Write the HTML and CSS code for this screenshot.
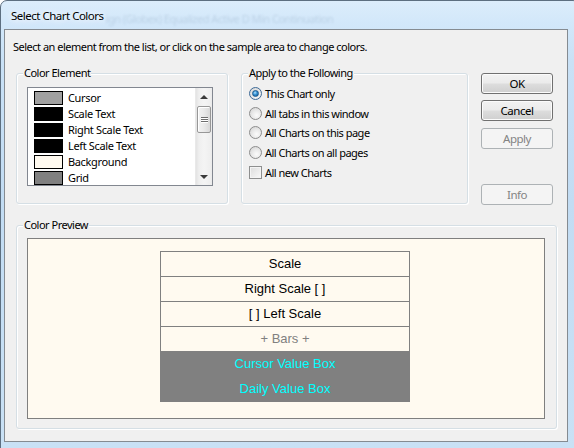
FILE: index.html
```html
<!DOCTYPE html>
<html>
<head>
<meta charset="utf-8">
<link rel="stylesheet" href="styles.css">
</head>
<body>
<div class="window">
  <div class="titlebar">
    <span class="title">Select Chart Colors</span>
    <span class="ghost">ign (Globex) Equalized Active D Min Continuation</span>
  </div>
  <div class="client">
    <p class="intro">Select an element from the list, or click on the sample area to change colors.</p>
    <div class="top-row">
      <div class="group ce">
        <div class="glabel">Color Element</div>
        <div class="listbox">
          <ul class="items">
            <li><span class="swatch sw-cursor"></span>Cursor</li>
            <li><span class="swatch sw-black"></span>Scale Text</li>
            <li><span class="swatch sw-black"></span>Right Scale Text</li>
            <li><span class="swatch sw-black"></span>Left Scale Text</li>
            <li><span class="swatch sw-bg"></span>Background</li>
            <li><span class="swatch sw-grid"></span>Grid</li>
          </ul>
          <div class="scrollbar">
            <div class="arrow up"></div>
            <div class="track">
              <div class="thumb"><span></span><span></span><span></span></div>
            </div>
            <div class="arrow down"></div>
          </div>
        </div>
      </div>
      <div class="group apply">
        <div class="glabel">Apply to the Following</div>
        <div class="opts">
          <div class="opt"><span class="radio checked"><span class="dot"></span></span>This Chart only</div>
          <div class="opt"><span class="radio"></span>All tabs in this window</div>
          <div class="opt"><span class="radio"></span>All Charts on this page</div>
          <div class="opt"><span class="radio"></span>All Charts on all pages</div>
          <div class="opt"><span class="check"></span>All new Charts</div>
        </div>
      </div>
      <div class="buttons">
        <div class="btn">OK</div>
        <div class="btn cancel">Cancel</div>
        <div class="btn disabled apply-btn">Apply</div>
        <div class="btn disabled info-btn">Info</div>
      </div>
    </div>
    <div class="group preview">
      <div class="glabel">Color Preview</div>
      <div class="sample">
        <div class="ptable">
          <div class="prow">Scale</div>
          <div class="prow">Right Scale [ ]</div>
          <div class="prow">[ ] Left Scale</div>
          <div class="prow bars">+ Bars +</div>
          <div class="prow dark">Cursor Value Box</div>
          <div class="prow dark">Daily Value Box</div>
        </div>
      </div>
    </div>
  </div>
</div>
</body>
</html>
```

FILE: styles.css
```css
* { box-sizing: border-box; }
html, body { margin: 0; padding: 0; background: #ffffff; }
body {
  width: 574px;
  height: 448px;
  overflow: hidden;
  font-family: "Noto Sans", "Open Sans", sans-serif;
  font-size: 11px;
  letter-spacing: -0.5px;
  color: #000;
}
.window {
  width: 580px;
  height: 455px;
  border: 1px solid #5d6f80;
  border-radius: 7px 7px 0 0;
  background: linear-gradient(to bottom, #dcedfb 0px, #d3e8fa 20px, #c9e1f6 60px, #c2dcf3 200px, #c9e1f5 447px);
  padding-left: 3px;
}
.titlebar {
  height: 28px;
  display: flex;
  align-items: center;
  padding-left: 7px;
  padding-top: 1px;
  gap: 2px;
}
.title {
  line-height: 16px;
  font-size: 11.5px;
  text-shadow: 0 0 6px #ffffff, 0 0 10px #ffffff;
}
.ghost {
  color: rgba(70, 100, 130, 0.17);
  filter: blur(0.9px);
  padding-top: 5px;
}
.client {
  width: 564px;
  height: 413px;
  border: 1px solid #858b91;
  background: #f0f0f0;
}
.intro {
  margin: 0;
  padding: 9px 0 0 8px;
  line-height: 16px;
}
.top-row {
  display: flex;
  align-items: flex-start;
  margin-top: 18px;
  padding-left: 11px;
}
.group {
  border: 1px solid #d5dfe5;
  border-radius: 3px;
  box-shadow: inset 1px 1px 0 #ffffff, 1px 1px 0 #ffffff;
}
.glabel {
  width: fit-content;
  margin: -9px 0 0 6px;
  padding: 0 1px;
  line-height: 16px;
  background: #f0f0f0;
}
.ce {
  width: 212px;
  height: 131px;
}
.listbox {
  margin: 6px 0 0 10px;
  width: 186px;
  height: 99px;
  border: 1px solid #828790;
  background: #ffffff;
  display: flex;
}
.items {
  list-style: none;
  margin: 0;
  padding: 2px 0 0 6px;
  flex: 1;
  letter-spacing: -0.35px;
}
.items li {
  height: 16px;
  display: flex;
  align-items: center;
  line-height: 16px;
}
.swatch {
  width: 29px;
  height: 14px;
  border: 1px solid #000;
  margin-right: 5px;
}
.sw-cursor { background: #a0a0a0; }
.sw-black { background: #000000; }
.sw-bg { background: #fffaf0; }
.sw-grid { background: #808080; }
.scrollbar {
  width: 17px;
  display: flex;
  flex-direction: column;
  background: linear-gradient(to right, #e3e3e3 0px, #efefef 3px, #f4f4f4 8px, #efefef 14px, #e8e8e8 17px);
  border-left: 1px solid #e9e9e9;
}
.arrow {
  height: 17px;
  display: flex;
  align-items: center;
  justify-content: center;
}
.arrow.up::before {
  content: "";
  border-left: 4px solid transparent;
  border-right: 4px solid transparent;
  border-bottom: 4px solid #3b3b3b;
}
.arrow.down::before {
  content: "";
  border-left: 4px solid transparent;
  border-right: 4px solid transparent;
  border-top: 4px solid #3b3b3b;
}
.track { flex: 1; padding: 1px 1px 0 1px; }
.thumb {
  height: 27px;
  border: 1px solid #979797;
  border-radius: 2px;
  background: linear-gradient(to right, #f3f3f3, #e9e9e9 50%, #d8d8d8);
  box-shadow: inset 1px 1px 0 #ffffff;
  display: flex;
  flex-direction: column;
  align-items: center;
  justify-content: center;
  gap: 1px;
}
.thumb span {
  width: 7px;
  height: 1px;
  background: #6d6d6d;
  box-shadow: 0 1px 0 #ffffff;
}
.apply {
  width: 227px;
  height: 131px;
  margin-left: 13px;
}
.opts {
  padding: 3px 0 0 7px;
}
.opt {
  height: 19.6px;
  display: flex;
  align-items: center;
  gap: 3px;
}
.radio {
  width: 13px;
  height: 13px;
  border-radius: 50%;
  border: 1px solid #8d8d8d;
  background: radial-gradient(circle at 60% 65%, #fbfbfb 0%, #e9e9e9 45%, #cfcfcf 100%);
  display: flex;
  align-items: center;
  justify-content: center;
}
.radio.checked { border-color: #3d6a97; }
.radio .dot {
  width: 7px;
  height: 7px;
  border-radius: 50%;
  background: radial-gradient(circle at 40% 35%, #b4e2ff 0%, #3c97d6 40%, #125a98 90%);
  border: 1px solid #1c5a8e;
}
.check {
  width: 13px;
  height: 13px;
  border: 1px solid #8e8f8f;
  background: linear-gradient(135deg, #dcdcdc, #f9f9f9);
  box-shadow: inset 0 0 0 1px #f4f4f4;
}
.buttons {
  margin-left: 13px;
  width: 72px;
  display: flex;
  flex-direction: column;
}
.btn {
  height: 21px;
  border: 1px solid #707070;
  border-radius: 3px;
  background: linear-gradient(to bottom, #f2f2f2 0%, #ebebeb 48%, #dddddd 52%, #cfcfcf 100%);
  box-shadow: inset 0 0 0 1px #fbfbfb;
  display: flex;
  align-items: center;
  justify-content: center;
  line-height: 16px;
  font-size: 11.5px;
}
.btn.cancel { margin-top: 6px; }
.btn.disabled {
  border-color: #adb2b5;
  background: #f4f4f4;
  box-shadow: none;
  color: #838383;
}
.apply-btn { margin-top: 7px; }
.info-btn { margin-top: 35px; }
.preview {
  margin: 20px 0 0 11px;
  width: 541px;
  height: 204px;
}
.sample {
  margin: 5px 0 0 10px;
  width: 518px;
  height: 181px;
  border: 1px solid #7f7f7f;
  background: #fffaf0;
  padding: 12px 0 0 132px;
}
.ptable {
  width: 250px;
  border-top: 1px solid #808080;
  font-family: "Liberation Sans", Arial, sans-serif;
  font-size: 13px;
  letter-spacing: 0;
}
.prow {
  height: 25px;
  padding-bottom: 2px;
  border: 1px solid #808080;
  border-top: none;
  display: flex;
  align-items: center;
  justify-content: center;
}
.prow.bars { color: #808080; }
.prow.dark { background: #808080; color: #00ffff; }
```
